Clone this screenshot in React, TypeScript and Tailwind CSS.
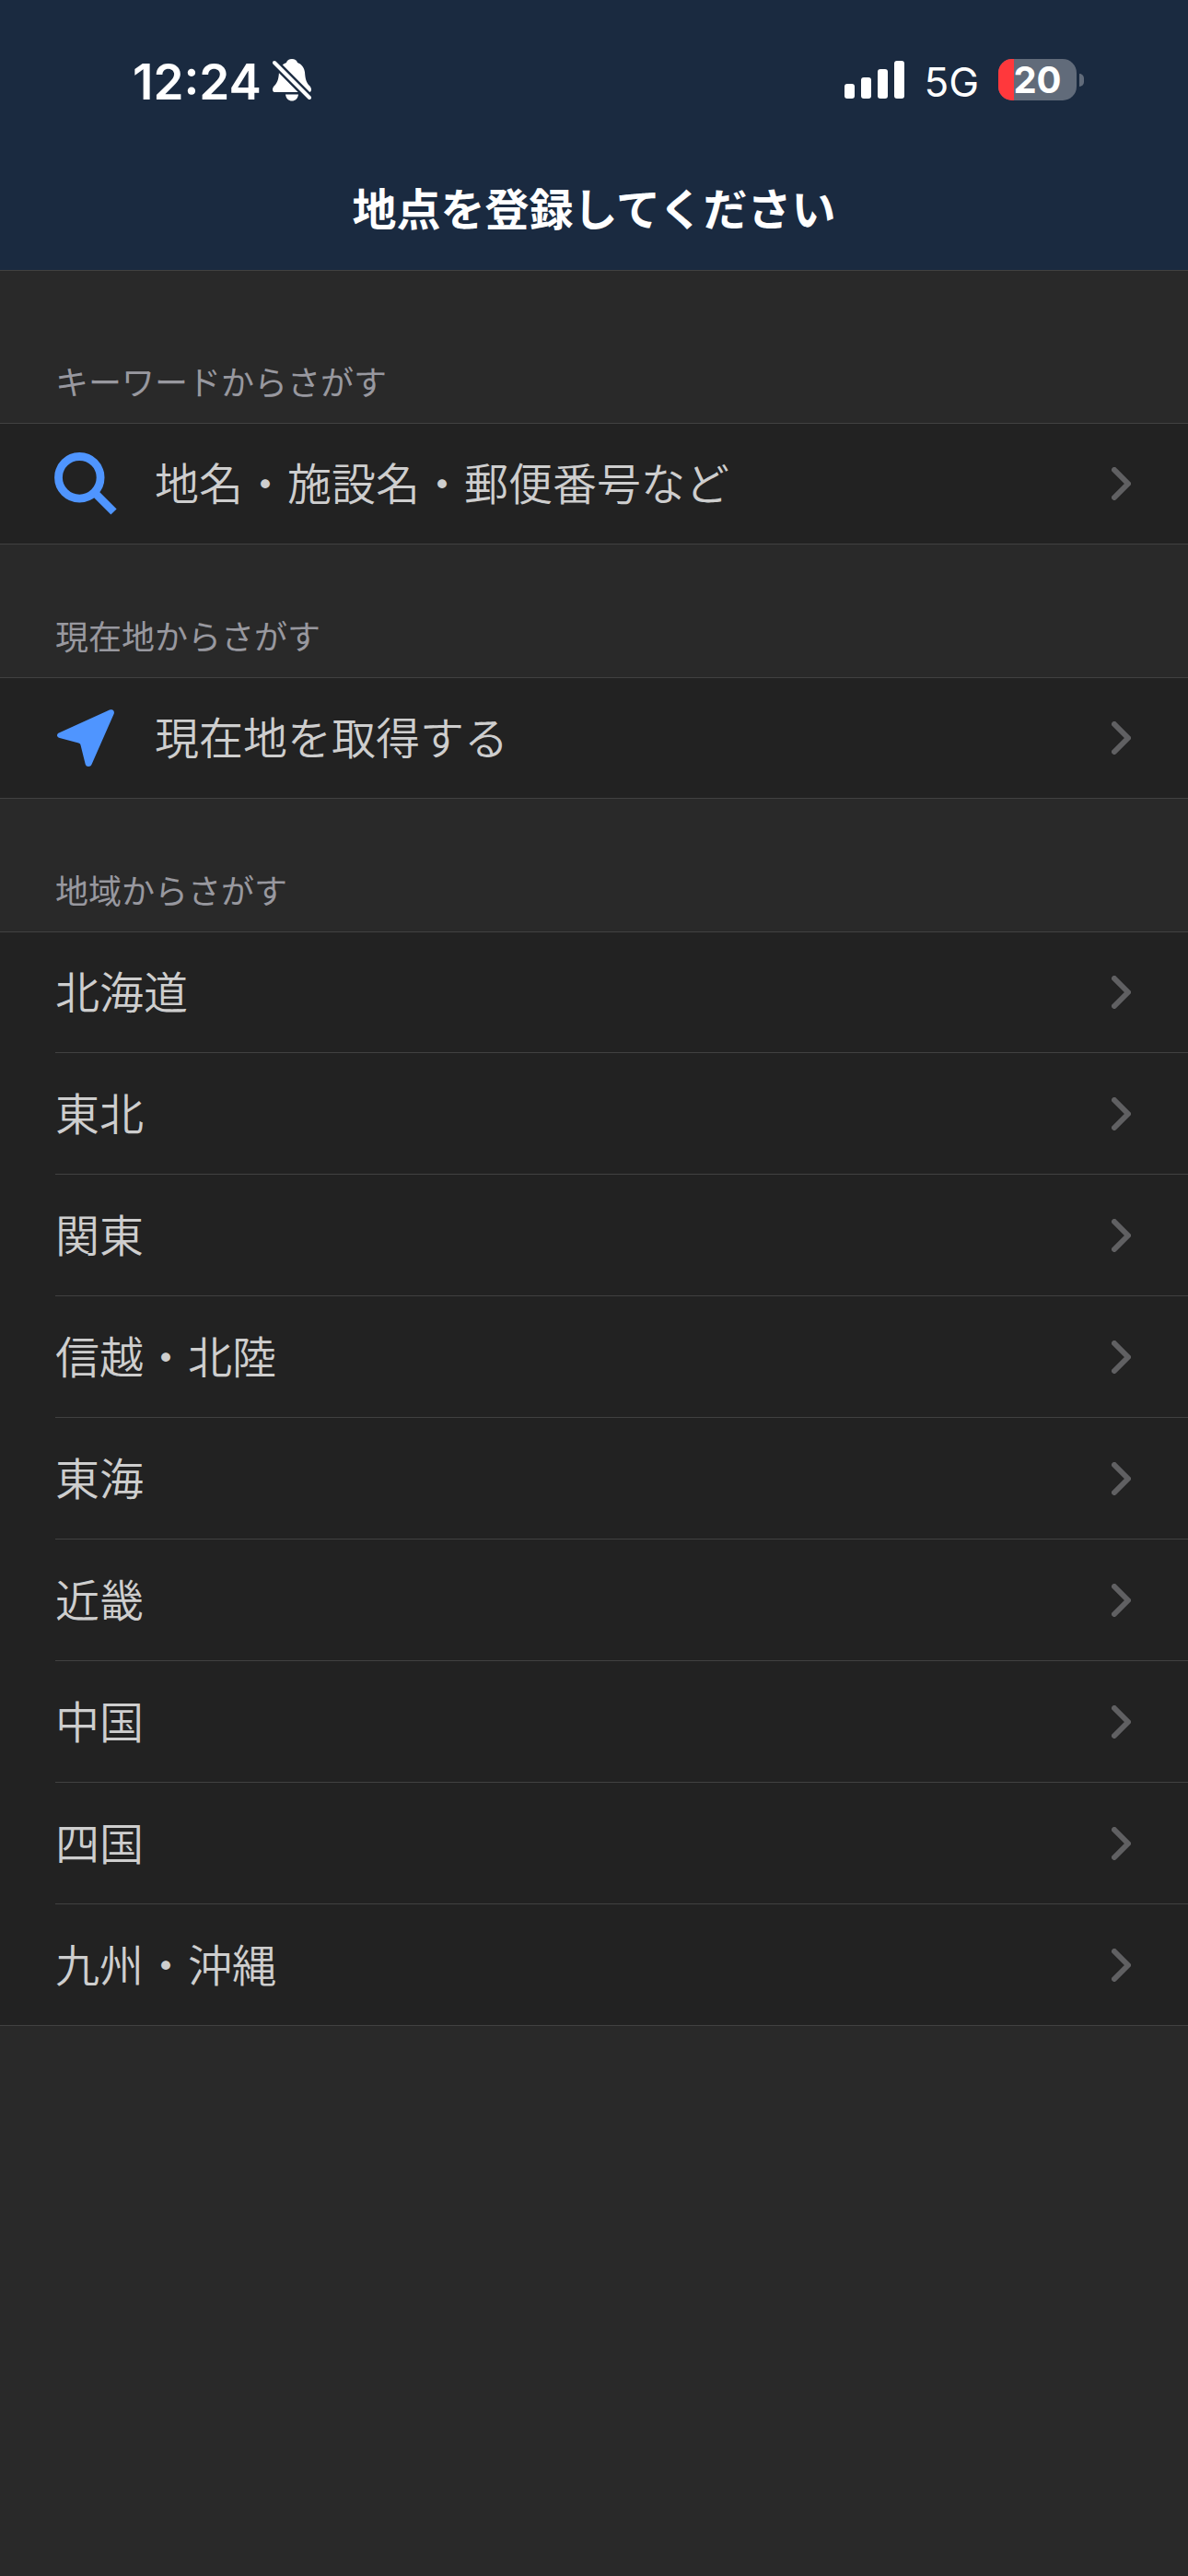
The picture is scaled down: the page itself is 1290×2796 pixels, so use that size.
import { ReactNode } from "react";

interface RowProps {
  label: string;
  icon?: ReactNode;
}

const regions = ["北海道", "東北", "関東", "信越・北陸", "東海", "近畿", "中国", "四国", "九州・沖縄"];

function MutedBell() {
  return (
    <svg viewBox="0 0 42 46" className="h-[46px] w-[42px]" aria-hidden="true">
      <path
        d="M21 0c-3 0-5.400 1.600-6 4-4.500 1.600-7.500 5.500-8 10.500C6.400 22 5.500 25.500 2 29c-1.500 1.600-2 2.700-2 4.200C0 35.200 1.200 36 3 36h36c1.800 0 3-.8 3-2.800 0-1.500-.5-2.600-2-4.200-3.500-3.500-4.400-7-5-14.500C34.500 9.500 31.500 5.600 27 4c-.6-2.400-3-4-6-4Z"
        fill="#fff"
      />
      <path d="M14 38.500h14c-.6 4.400-3.400 7-7 7s-6.400-2.600-7-7Z" fill="#fff" />
      <path d="M2 4l38 38" stroke="#1a2a40" strokeWidth="9" strokeLinecap="round" />
      <path d="M2 4l38 38" stroke="#fff" strokeWidth="4" strokeLinecap="round" />
    </svg>
  );
}

function Signal() {
  return (
    <svg viewBox="0 0 65 41" className="h-[41px] w-[65px]" fill="#fff" aria-hidden="true">
      <rect x="0" y="25" width="11" height="16" rx="3" />
      <rect x="18" y="18" width="11" height="23" rx="3" />
      <rect x="36" y="9" width="11" height="32" rx="3" />
      <rect x="54" y="0" width="11" height="41" rx="3" />
    </svg>
  );
}

function Battery({ level }: { level: number }) {
  return (
    <div className="flex items-center gap-[3px]">
      <div className="relative w-[85px]">
        <div className="h-[45px] overflow-hidden rounded-[15px] bg-[#616b7a]">
          <div className="h-full bg-[#ff383c]" style={{ width: `${level}%` }} />
        </div>
        <span className="absolute inset-0 flex items-center justify-center text-[40px] leading-[50px] font-bold">
          {level}
        </span>
      </div>
      <div className="h-[14px] w-[5px] rounded-r-full bg-[#616b7a]" />
    </div>
  );
}

function SearchIcon() {
  return (
    <svg viewBox="0 0 68 68" className="h-[68px] w-[68px] overflow-visible" fill="none" stroke="#4f95ff" aria-hidden="true">
      <circle cx="26.300" cy="27.300" r="22.800" strokeWidth="8.800" />
      <path d="M41 42l22.500 22.500" strokeWidth="8.800" />
    </svg>
  );
}

function LocationIcon() {
  return (
    <svg viewBox="0 0 68 68" className="h-[68px] w-[68px]" aria-hidden="true">
      <path
        d="M4.500 28.300L59 3.600c3-1.300 5.800 1 4.700 4.200L39.500 62.800c-1.200 3-6 3-6.800-.3L27.600 42c-.4-1.600-.8-2-2.200-2.500L4.800 34c-3.600-1-3.700-4.300-.3-5.700Z"
        fill="#4f95ff"
      />
    </svg>
  );
}

function Chevron() {
  return (
    <svg
      viewBox="0 0 21 36"
      className="h-[36px] w-[21px]"
      fill="none"
      stroke="#606062"
      strokeWidth="6"
      strokeLinecap="round"
      strokeLinejoin="round"
      aria-hidden="true"
    >
      <path d="M3 3l15 15L3 33" />
    </svg>
  );
}

function Row({ label, icon }: RowProps) {
  return (
    <li className="group pl-[60px]">
      <button
        type="button"
        className="flex h-[132px] w-full items-center border-b border-[#414141] pr-[62px] text-left group-first:h-[131px] group-last:border-transparent"
      >
        {icon && <span className="w-[108px] shrink-0">{icon}</span>}
        <span className="grow pb-[6px] text-[48px] leading-[72px] font-[350] text-[#cecece]">{label}</span>
        <Chevron />
      </button>
    </li>
  );
}

function Section({ title, children }: { title: string; children: ReactNode }) {
  return (
    <section>
      <h2 className="px-[60px] pt-[71px] pb-[19px] text-[36px] leading-[54px] font-normal text-[#98989f]">{title}</h2>
      <ul className="relative border-t border-[#414141] bg-[#222] after:absolute after:inset-x-0 after:bottom-0 after:h-px after:bg-[#414141]">
        {children}
      </ul>
    </section>
  );
}

export default function App() {
  return (
    <div className="min-h-screen bg-[#292929] font-['Noto_Sans_CJK_JP',sans-serif]">
      <header className="border-b border-[#414141] bg-[#1a2a40] text-white">
        <div className="flex h-[162px] items-center justify-between pt-[11px] pr-[113px] pl-[144px] font-['Inter',sans-serif]">
          <div className="flex items-center gap-[12px]">
            <span className="pt-[4px] text-[53px] leading-[60px] font-semibold">12:24</span>
            <MutedBell />
          </div>
          <div className="flex items-center gap-[21px]">
            <Signal />
            <span className="pt-[4px] text-[44px] leading-[60px]">5G</span>
            <Battery level={20} />
          </div>
        </div>
        <h1 className="pt-[27px] pb-[33px] text-center text-[48px] leading-[71px] font-bold">地点を登録してください</h1>
      </header>

      <main className="pt-[21px]">
        <Section title="キーワードからさがす">
          <Row label="地名・施設名・郵便番号など" icon={<SearchIcon />} />
        </Section>
        <Section title="現在地からさがす">
          <Row label="現在地を取得する" icon={<LocationIcon />} />
        </Section>
        <Section title="地域からさがす">
          {regions.map((region) => (
            <Row key={region} label={region} />
          ))}
        </Section>
      </main>
    </div>
  );
}
